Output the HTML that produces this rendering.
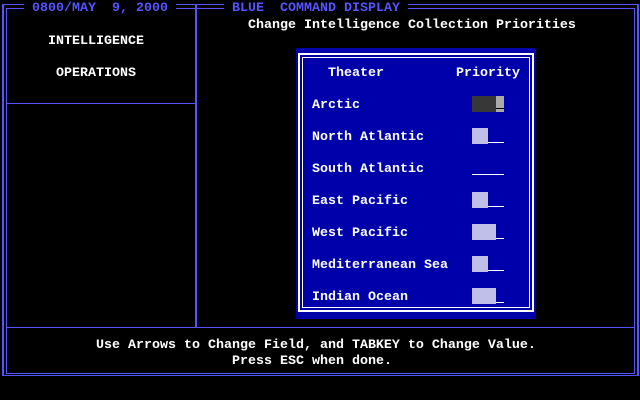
<!DOCTYPE html>
<html><head><style>
*{margin:0;padding:0;box-sizing:border-box}
body{width:640px;height:400px;background:#000;position:relative;overflow:hidden;font-family:"Liberation Mono",monospace;font-weight:bold;font-size:13.33px;color:#fff}
.l{position:absolute;background:#5555ff}
.t{position:absolute;white-space:pre;line-height:16px;margin-top:2px}
.dw{position:absolute;background-color:#fff;background-image:radial-gradient(circle,#0000aa 0.5px,transparent 0.6px);background-size:2px 2px}
.dk{position:absolute;background-color:#111;background-image:radial-gradient(circle,#aaa 0.5px,transparent 0.6px);background-size:2px 2px}
.u{position:absolute;height:1px;background:#fff}
</style></head><body>
<div class="l" style="left:2px;top:4px;width:2px;height:372px"></div>
<div class="l" style="left:6px;top:8px;width:1px;height:366px"></div>
<div class="l" style="left:637px;top:4px;width:2px;height:372px"></div>
<div class="l" style="left:634px;top:8px;width:1px;height:366px"></div>
<div class="l" style="left:2px;top:4px;width:637px;height:1px"></div>
<div class="l" style="left:6px;top:8px;width:629px;height:1px"></div>
<div class="l" style="left:2px;top:375px;width:637px;height:1px"></div>
<div class="l" style="left:6px;top:373px;width:629px;height:1px"></div>
<div class="l" style="left:195px;top:4px;width:2px;height:323px"></div>
<div class="l" style="left:6px;top:103px;width:190px;height:1px"></div>
<div class="l" style="left:6px;top:327px;width:629px;height:1px"></div>
<div class="t" style="left:24px;top:-1px;background:#000;color:#5555ff;padding:0 8px">0800/MAY  9, 2000</div>
<div class="t" style="left:224px;top:-1px;background:#000;color:#5555ff;padding:0 8px">BLUE  COMMAND DISPLAY</div>
<div class="t" style="left:248px;top:16px">Change Intelligence Collection Priorities</div>
<div class="t" style="left:48px;top:32px">INTELLIGENCE</div>
<div class="t" style="left:56px;top:64px">OPERATIONS</div>
<div class="t" style="left:96px;top:336px">Use Arrows to Change Field, and TABKEY to Change Value.</div>
<div class="t" style="left:232px;top:352px">Press ESC when done.</div>
<div style="position:absolute;left:296px;top:48px;width:240px;height:271px;background:#0000aa"></div>
<div style="position:absolute;left:298px;top:53px;width:236px;height:259px;border:2px solid #fff"></div>
<div style="position:absolute;left:302px;top:57px;width:228px;height:251px;border:1px solid #fff"></div>
<div class="t" style="left:328px;top:64px">Theater</div>
<div class="t" style="left:456px;top:64px">Priority</div>
<div class="t" style="left:312px;top:96px">Arctic</div>
<div class="t" style="left:312px;top:128px">North Atlantic</div>
<div class="t" style="left:312px;top:160px">South Atlantic</div>
<div class="t" style="left:312px;top:192px">East Pacific</div>
<div class="t" style="left:312px;top:224px">West Pacific</div>
<div class="t" style="left:312px;top:256px">Mediterranean Sea</div>
<div class="t" style="left:312px;top:288px">Indian Ocean</div>
<div class="dk" style="left:472px;top:96px;width:24px;height:16px"></div>
<div style="position:absolute;left:496px;top:96px;width:8px;height:16px;background:#aaa"></div>
<div style="position:absolute;left:496px;top:108px;width:8px;height:1px;background:#000"></div>
<div class="dw" style="left:472px;top:128px;width:16px;height:16px"></div><div class="u" style="left:488px;top:142px;width:16px"></div>
<div class="u" style="left:472px;top:174px;width:32px"></div>
<div class="dw" style="left:472px;top:192px;width:16px;height:16px"></div><div class="u" style="left:488px;top:206px;width:16px"></div>
<div class="dw" style="left:472px;top:224px;width:24px;height:16px"></div><div class="u" style="left:496px;top:238px;width:8px"></div>
<div class="dw" style="left:472px;top:256px;width:16px;height:16px"></div><div class="u" style="left:488px;top:270px;width:16px"></div>
<div class="dw" style="left:472px;top:288px;width:24px;height:16px"></div><div class="u" style="left:496px;top:302px;width:8px"></div>
</body></html>
